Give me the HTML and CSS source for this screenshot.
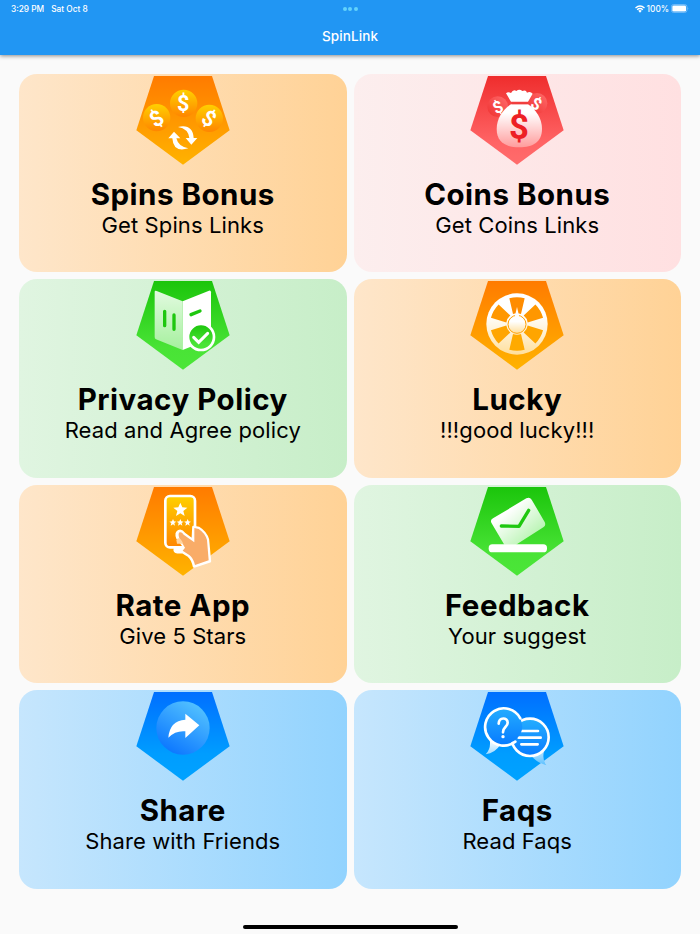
FILE: index.html
```html
<!doctype html>
<html lang="en">
<head>
    <meta charset="UTF-8">
    <meta name="viewport" content="width=device-width, initial-scale=1.0">
    <title>SpinLink</title>
    <link rel="stylesheet" href="styles.css">
</head>
<body>
<svg class="defs" width="0" height="0">
    <defs>
        <linearGradient id="orange" x2="0" y2="1"><stop offset="0" stop-color="#ff7b00"/><stop offset="1" stop-color="#ffb300"/></linearGradient>
        <linearGradient id="red" x2="0" y2="1"><stop offset="0" stop-color="#ef2d2d"/><stop offset=".75" stop-color="#ff6465"/><stop offset="1" stop-color="#ff6c6c"/></linearGradient>
        <linearGradient id="green" x2="0" y2="1"><stop offset="0" stop-color="#1bc50b"/><stop offset=".75" stop-color="#49e336"/><stop offset="1" stop-color="#4be638"/></linearGradient>
        <linearGradient id="blue" x2="0" y2="1"><stop offset="0" stop-color="#006fff"/><stop offset=".7" stop-color="#009dff"/><stop offset="1" stop-color="#00a2ff"/></linearGradient>
        <linearGradient id="coin" x2="0" y2="1"><stop offset="0" stop-color="#ffd000"/><stop offset="1" stop-color="#ff8500"/></linearGradient>
        <linearGradient id="redcoin" x1="1" x2="0" y2="1"><stop offset="0" stop-color="#ff6b6b"/><stop offset="1" stop-color="#ef3030"/></linearGradient>
        <linearGradient id="bag" x2="0" y2="1"><stop offset=".2" stop-color="#fff"/><stop offset="1" stop-color="#ff9c9c"/></linearGradient>
        <linearGradient id="page" x2="0" y2="1"><stop offset="0" stop-color="#e2fae0"/><stop offset="1" stop-color="#a5f09d"/></linearGradient>
        <linearGradient id="wheel" x2="0" y2="1"><stop offset=".35" stop-color="#fff"/><stop offset="1" stop-color="#ffdf9c"/></linearGradient>
        <linearGradient id="letter" x2="1" y2="1"><stop offset=".3" stop-color="#fff"/><stop offset="1" stop-color="#a0f098"/></linearGradient>
        <linearGradient id="disc" x1=".8" x2=".2" y2="1"><stop offset="0" stop-color="#56c5ff"/><stop offset="1" stop-color="#0873ff"/></linearGradient>
        <linearGradient id="bubble" x2="0" y2="1"><stop offset="0" stop-color="#25aeff"/><stop offset="1" stop-color="#087cff"/></linearGradient>
        <linearGradient id="tail" x2="0" y2="1"><stop offset="0" stop-color="#fff"/><stop offset="1" stop-color="#5bc0ff"/></linearGradient>
    </defs>
</svg>

<header class="header">
    <div class="status">
        <div class="time"><span>3:29 PM</span><span>Sat Oct 8</span></div>
        <div class="dots"><i></i><i></i><i></i></div>
        <div class="power">
            <svg class="wifi" viewBox="0 0 20 16" fill="none" stroke="#fff" stroke-width="2.7">
                <path d="M1 6Q10-2 19 6M4.300 9.500Q10 4.500 15.700 9.500"/>
                <path d="M6.500 11.500Q10 8.500 13.500 11.500L10 15.500Z" fill="#fff" stroke="none"/>
            </svg>
            <span>100%</span>
            <svg class="battery" viewBox="0 0 54 26">
                <rect x="1" y="1" width="47" height="24" rx="7" fill="none" stroke="#8fc9fa" stroke-width="2"/>
                <rect x="4" y="4" width="41" height="18" rx="4" fill="#fff"/>
                <path d="M50 9q4 4 0 8z" fill="#8fc9fa"/>
            </svg>
        </div>
    </div>
    <h1>SpinLink</h1>
</header>

<main class="grid">
    <div class="card orange">
        <svg class="icon" viewBox="18 24 282 267">
            <path fill="url(#orange)" d="M72 24H246L299 187 159 290 19 187Z"/>
            <g fill="url(#coin)"><circle cx="161" cy="106" r="41"/><circle cx="80" cy="149" r="41"/><circle cx="238" cy="151" r="41"/></g>
            <g class="dollar">
                <text x="160" y="129">$</text>
                <text x="80" y="174" transform="rotate(-32 80 152)">$</text>
                <text x="237" y="174" transform="rotate(32 237 152)">$</text>
            </g>
            <path fill="#fff" d="M144 177Q188 167 191 210H202L184 230 167 210H178Q175 182 144 177ZM175 241Q130 255 127 211H115L132 191 151 211H139Q145 236 175 241Z"/>
        </svg>
        <h2>Spins Bonus</h2>
        <p>Get Spins Links</p>
    </div>
    <div class="card pink">
        <svg class="icon" viewBox="19 24 282 267">
            <path fill="url(#red)" d="M73 24H247L300 187 160 290 20 187Z"/>
            <g fill="url(#redcoin)"><circle cx="102" cy="116" r="31"/><circle cx="220" cy="106" r="31"/></g>
            <path d="M142 109H193C216 124 235 151 235 183C235 222 208 238 167 238C126 238 99 222 99 183C99 151 118 124 142 109Z" fill="url(#bag)"/>
            <path d="M142 101L127 76Q133 70 142 75Q149 62 158 69Q167 61 176 69Q187 64 190 74Q200 69 207 77L193 101Z" fill="#fff"/>
            <path d="M144 106H192" stroke="#ef3d3d" stroke-width="5"/>
            <g class="dollar small">
                <text x="103" y="135" transform="rotate(-25 103 118)">$</text>
                <text x="218" y="125" transform="rotate(30 218 108)">$</text>
            </g>
            <text class="dollar big" x="166" y="212">$</text>
        </svg>
        <h2>Coins Bonus</h2>
        <p>Get Coins Links</p>
    </div>
    <div class="card green">
        <svg class="icon" viewBox="18 22 282 267">
            <path fill="url(#green)" d="M72 22H246L299 185 159 288 19 185Z"/>
            <path d="M74 55Q74 49 80 52L158 83V229L78 197Q74 195 74 190Z" fill="url(#page)"/>
            <path d="M158 83L237 51Q243 49 243 56V190Q243 195 238 197L158 229Z" fill="#fff"/>
            <g fill="none" stroke="#1ec70f" stroke-width="10" stroke-linecap="round"><path d="M104 113V156M132 124V167M183 123L210 112"/></g>
            <circle cx="213" cy="190" r="39" fill="url(#green)" stroke="#fff" stroke-width="8"/>
            <path d="M191 191L206 206 233 179" fill="none" stroke="#fff" stroke-width="9" stroke-linecap="round"/>
        </svg>
        <h2>Privacy Policy</h2>
        <p>Read and Agree policy</p>
    </div>
    <div class="card orange">
        <svg class="icon" viewBox="19 22 282 267">
            <path fill="url(#orange)" d="M73 22H247L300 185 160 288 20 185Z"/>
            <circle cx="160" cy="151" r="92" fill="url(#wheel)"/>
            <g fill="#ff9700">
                <path fill="#ff8c00" d="M137 74Q160 68 183 74L172 121Q160 116 148 121Z"/>
                <path d="M137 74Q160 68 183 74L172 121Q160 116 148 121Z" transform="rotate(60 160 151)"/>
                <path fill="#ffa500" d="M137 74Q160 68 183 74L172 121Q160 116 148 121Z" transform="rotate(120 160 151)"/>
                <path fill="#ffaa00" d="M137 74Q160 68 183 74L172 121Q160 116 148 121Z" transform="rotate(180 160 151)"/>
                <path fill="#ffa500" d="M137 74Q160 68 183 74L172 121Q160 116 148 121Z" transform="rotate(240 160 151)"/>
                <path d="M137 74Q160 68 183 74L172 121Q160 116 148 121Z" transform="rotate(300 160 151)"/>
            </g>
            <circle cx="160" cy="152" r="27" fill="url(#wheel)" stroke="#ffa000" stroke-width="3"/>
            <path d="M153 130L160 100 167 130Z" fill="#fff"/>
        </svg>
        <h2>Lucky</h2>
        <p>!!!good lucky!!!</p>
    </div>
    <div class="card orange">
        <svg class="icon" viewBox="18 22 282 267">
            <path fill="url(#orange)" d="M72 22H246L299 185 159 288 19 185Z"/>
            <rect x="106" y="49" width="89" height="154" rx="14" fill="url(#coin)" stroke="#fff" stroke-width="8"/>
            <path fill="#fff" d="M151 69L157 83 172 84 160 94 164 109 151 101 138 109 142 94 130 84 145 83Z"/>
            <g fill="#fff">
                <path d="M129 118L132 125 139 126 133 130 135 138 129 134 122 138 124 130 118 126 126 125Z"/>
                <path d="M151 118L154 125 161 126 155 130 157 138 151 134 144 138 146 130 140 126 148 125Z"/>
                <path d="M173 118L176 125 183 126 177 130 179 138 173 134 166 138 168 130 162 126 170 125Z"/>
            </g>
            <path d="M190 142L207 145Q228 158 234 180L240 245 192 261Q187 238 176 229L158 218H142Q132 217 134 208L154 206Q164 206 160 198L142 175Q136 160 146 154Q155 150 163 162L188 181Z" fill="#fff" stroke="#fff" stroke-width="7" stroke-linejoin="round"/>
            <path d="M193 145L206 148Q225 160 231 181L236 242 195 256Q190 236 179 227L158 213 165 204 148 176Q143 162 149 158Q155 156 161 165L193 188Z" fill="#f9ac68"/>
            <path d="M139 181Q147 166 160 192H141Z" fill="#ffd4a0"/>
        </svg>
        <h2>Rate App</h2>
        <p>Give 5 Stars</p>
    </div>
    <div class="card green">
        <svg class="icon" viewBox="19 22 282 267">
            <path fill="url(#green)" d="M73 22H247L300 185 160 288 20 185Z"/>
            <path d="M88 116L188 56Q198 51 204 60L243 127Q248 137 239 143L157 195H122L83 129Q79 121 88 116Z" fill="url(#letter)"/>
            <path d="M113 139L166 140 195 92" fill="none" stroke="#1fc810" stroke-width="10" stroke-linecap="round" stroke-linejoin="round"/>
            <rect x="75" y="194" width="175" height="24" rx="11" fill="#fff"/>
        </svg>
        <h2>Feedback</h2>
        <p>Your suggest</p>
    </div>
    <div class="card blue">
        <svg class="icon" viewBox="18 22 282 267">
            <path fill="url(#blue)" d="M72 22H246L299 185 159 288 19 185Z"/>
            <circle cx="159" cy="130" r="80" fill="url(#disc)"/>
            <path d="M166 87L208 122 166 160V140Q137 137 115 159Q119 108 166 105Z" fill="#fff"/>
        </svg>
        <h2>Share</h2>
        <p>Share with Friends</p>
    </div>
    <div class="card blue">
        <svg class="icon" viewBox="19 22 282 267">
            <path fill="url(#blue)" d="M73 22H247L300 185 160 288 20 185Z"/>
            <path d="M78 165Q83 191 66 209Q94 205 110 180ZM203 214Q219 233 248 242Q235 224 241 200Z" fill="url(#tail)"/>
            <circle cx="199" cy="158" r="56" fill="url(#bubble)" stroke="#fff" stroke-width="8"/>
            <path d="M171 139H223M165 159H231M173 179H222" stroke="#fff" stroke-width="8" stroke-linecap="round"/>
            <path d="M144 173A56 56 0 1 1 170 102Q179 119 174 138Q168 158 144 173Z" fill="url(#bubble)"/>
            <path d="M155 171A56 56 0 1 1 170 101" fill="none" stroke="#fff" stroke-width="8" stroke-linecap="round"/>
            <path d="M105 117C106 96 132 98 132 114C132 127 118 126 118 143" fill="none" stroke="#fff" stroke-width="8" stroke-linecap="round"/>
            <circle cx="118" cy="156" r="5" fill="#fff"/>
        </svg>
        <h2>Faqs</h2>
        <p>Read Faqs</p>
    </div>
</main>
<div class="home"></div>
</body>
</html>
```
FILE: styles.css
```css
*{
    margin: 0;
    padding: 0;
    box-sizing: border-box;
}
body{
    height: 934px;
    display: flex;
    flex-direction: column;
    background-color: #fafafa;
    font-family: Inter, "Liberation Sans", sans-serif;
    color: #000;
    overflow: hidden;
}
.defs{
    position: absolute;
}
.header{
    height: 55px;
    flex: none;
    background-color: #2196f3;
    box-shadow: 0 1px 4px rgba(0,0,0,0.45);
    color: #fff;
}
.status{
    height: 17px;
    padding: 0 11px;
    display: grid;
    grid-template-columns: 1fr auto 1fr;
    align-items: center;
    font-size: 8.3px;
    font-weight: 500;
}
.time{
    display: flex;
    gap: 7px;
}
.dots{
    display: flex;
    gap: 1.500px;
}
.dots i{
    width: 4px;
    height: 4px;
    border-radius: 50%;
    background-color: #62d3fc;
}
.power{
    display: flex;
    justify-content: flex-end;
    align-items: center;
    gap: 2px;
}
.wifi{
    width: 10px;
    height: 8px;
}
.battery{
    width: 18px;
    height: 9px;
}
.header h1{
    padding-top: 10px;
    font-size: 13.5px;
    line-height: 18px;
    font-weight: 500;
    letter-spacing: 0.1px;
    text-align: center;
}
.grid{
    padding: 18.700px 19px 0;
    display: grid;
    grid-template-columns: 1fr 1fr;
    grid-auto-rows: 198.400px;
    gap: 7.100px 7px;
}
.card{
    display: flex;
    flex-direction: column;
    align-items: center;
    padding-top: 2px;
    border-radius: 18px;
}
.icon{
    width: 94px;
    height: 89px;
    flex: none;
}
.orange{
    background: linear-gradient(to right, #fee6ca, #ffd296);
}
.pink{
    background: linear-gradient(to right, #fceeee, #ffe0e1);
}
.green{
    background: linear-gradient(to right, #e0f5e1, #c7eec8);
}
.blue{
    background: linear-gradient(to right, #c6e6fd, #92d3fe);
}
.card h2{
    margin-top: 10px;
    font-size: 29.5px;
    line-height: 38px;
    font-weight: 700;
    letter-spacing: 0.5px;
    white-space: nowrap;
}
.card p{
    font-size: 22px;
    line-height: 25px;
    letter-spacing: 0.1px;
    white-space: nowrap;
}
.dollar{
    fill: #fff;
    font-family: Roboto, sans-serif;
    font-size: 65px;
    font-weight: 700;
    text-anchor: middle;
}
.small{
    font-size: 50px;
}
.big{
    fill: #ed2024;
    font-size: 104px;
}
.home{
    width: 215px;
    height: 4px;
    margin: auto auto 5.500px;
    border-radius: 2px;
    background-color: #000;
}
```
